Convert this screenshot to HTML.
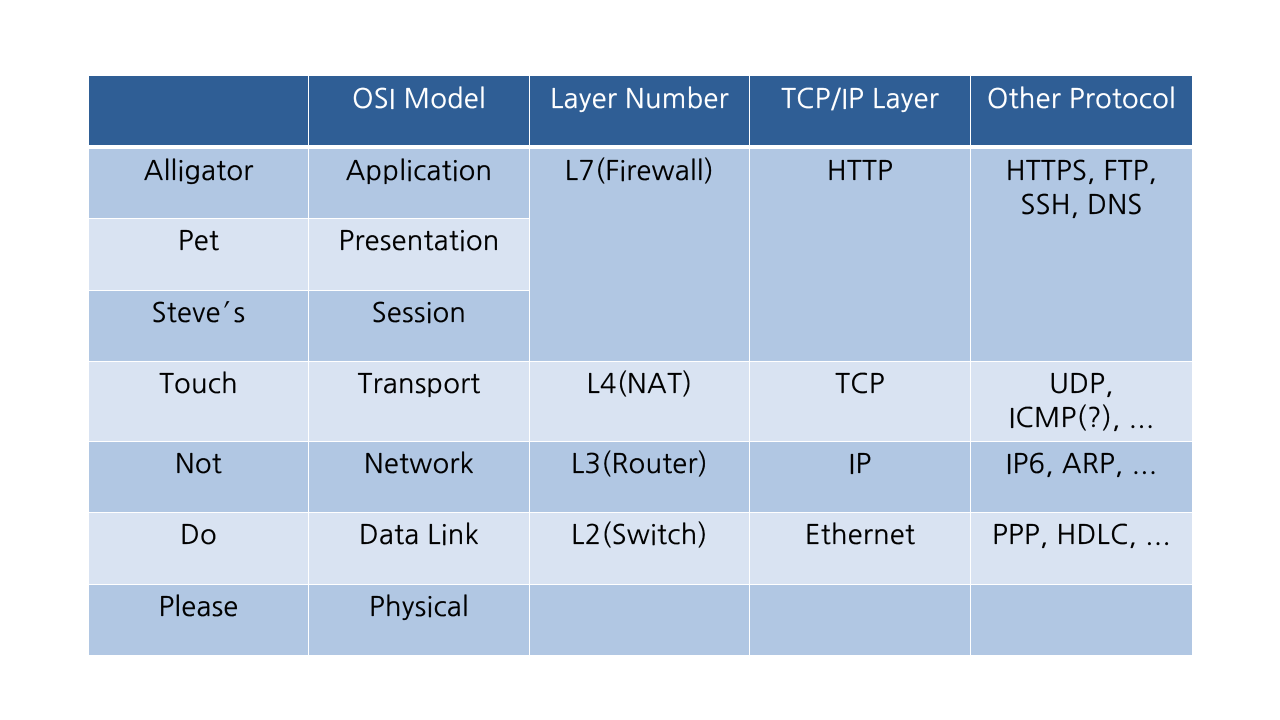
<!DOCTYPE html><html><head><style>
body{margin:0;width:1280px;height:720px;background:#fff;position:relative;overflow:hidden;font-family:"NanumGothic","Liberation Sans",sans-serif}
.c{position:absolute;box-sizing:border-box;text-align:center;font-size:27px;letter-spacing:0.4px;line-height:34px;padding-top:5px;color:#000;border-right:1px solid #fff;border-bottom:1px solid #fff;-webkit-text-stroke:0.3px #000}
.h{background:#2F5E95;color:#fff;padding-top:6px;-webkit-text-stroke:0.3px #fff}
.d{background:#B1C7E3}.l{background:#D9E3F2}
</style></head><body>
<div class="c h" style="left:89px;top:76px;width:220px;height:70px"></div>
<div class="c h" style="left:309px;top:76px;width:221px;height:70px">OSI Model</div>
<div class="c h" style="left:530px;top:76px;width:220px;height:70px">Layer Number</div>
<div class="c h" style="left:750px;top:76px;width:221px;height:70px">TCP/IP Layer</div>
<div class="c h" style="left:971px;top:76px;width:221px;height:70px;border-right:none">Other Protocol</div>

<div class="c d" style="left:89px;top:149px;width:220px;height:70px">Alligator</div>
<div class="c d" style="left:309px;top:149px;width:221px;height:70px">Application</div>
<div class="c l" style="left:89px;top:219px;width:220px;height:72px">Pet</div>
<div class="c l" style="left:309px;top:219px;width:221px;height:72px">Presentation</div>
<div class="c d" style="left:89px;top:291px;width:220px;height:71px">Steve′s</div>
<div class="c d" style="left:309px;top:291px;width:221px;height:71px">Session</div>
<div class="c d" style="left:530px;top:149px;width:220px;height:213px">L7(Firewall)</div>
<div class="c d" style="left:750px;top:149px;width:221px;height:213px">HTTP</div>
<div class="c d" style="left:971px;top:149px;width:221px;height:213px;border-right:none">HTTPS, FTP,<br>SSH, DNS</div>

<div class="c l" style="left:89px;top:362px;width:220px;height:80px">Touch</div>
<div class="c l" style="left:309px;top:362px;width:221px;height:80px">Transport</div>
<div class="c l" style="left:530px;top:362px;width:220px;height:80px">L4(NAT)</div>
<div class="c l" style="left:750px;top:362px;width:221px;height:80px">TCP</div>
<div class="c l" style="left:971px;top:362px;width:221px;height:80px;border-right:none">UDP,<br>ICMP(?), ...</div>

<div class="c d" style="left:89px;top:442px;width:220px;height:71px">Not</div>
<div class="c d" style="left:309px;top:442px;width:221px;height:71px">Network</div>
<div class="c d" style="left:530px;top:442px;width:220px;height:71px">L3(Router)</div>
<div class="c d" style="left:750px;top:442px;width:221px;height:71px">IP</div>
<div class="c d" style="left:971px;top:442px;width:221px;height:71px;border-right:none">IP6, ARP, ...</div>

<div class="c l" style="left:89px;top:513px;width:220px;height:72px">Do</div>
<div class="c l" style="left:309px;top:513px;width:221px;height:72px">Data Link</div>
<div class="c l" style="left:530px;top:513px;width:220px;height:72px">L2(Switch)</div>
<div class="c l" style="left:750px;top:513px;width:221px;height:72px">Ethernet</div>
<div class="c l" style="left:971px;top:513px;width:221px;height:72px;border-right:none">PPP, HDLC, ...</div>

<div class="c d" style="left:89px;top:585px;width:220px;height:70px;border-bottom:none">Please</div>
<div class="c d" style="left:309px;top:585px;width:221px;height:70px;border-bottom:none">Physical</div>
<div class="c d" style="left:530px;top:585px;width:220px;height:70px;border-bottom:none"></div>
<div class="c d" style="left:750px;top:585px;width:221px;height:70px;border-bottom:none"></div>
<div class="c d" style="left:971px;top:585px;width:221px;height:70px;border:none"></div>
</body></html>
